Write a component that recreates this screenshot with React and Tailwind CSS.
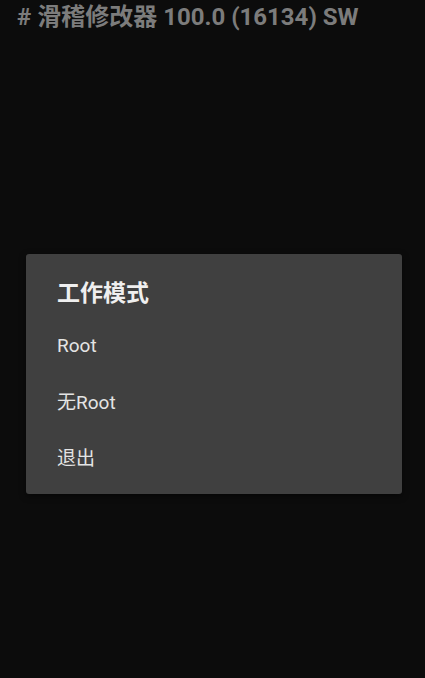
export default function App() {
  const font = { fontFamily: '"Roboto", "Noto Sans CJK SC", sans-serif' };
  return (
    <div className="w-full h-[678px] bg-[#0c0c0c] flex flex-col overflow-hidden" style={font}>
      <div className="pl-[17px] pt-[2px] h-[34px] text-[24px] leading-[30px] font-bold text-[#7c7c7c] whitespace-nowrap">
        # 滑稽修改器 100.0 (16134) SW
      </div>
      <div className="mt-[220px] ml-[26px] w-[376px] h-[240px] bg-[#404040] rounded-[3px] shadow-[0_2px_6px_rgba(0,0,0,0.5)] flex flex-col pl-[31px] pt-[26px]">
        <div className="text-[23px] leading-[28px] font-bold text-[#efefef]">工作模式</div>
        <div className="mt-[10px] flex flex-col">
          {["Root", "无Root", "退出"].map((t) => (
            <div key={t} className="h-[56.5px] flex items-center text-[19px] text-[#e4e4e4]">
              {t}
            </div>
          ))}
        </div>
      </div>
    </div>
  );
}
